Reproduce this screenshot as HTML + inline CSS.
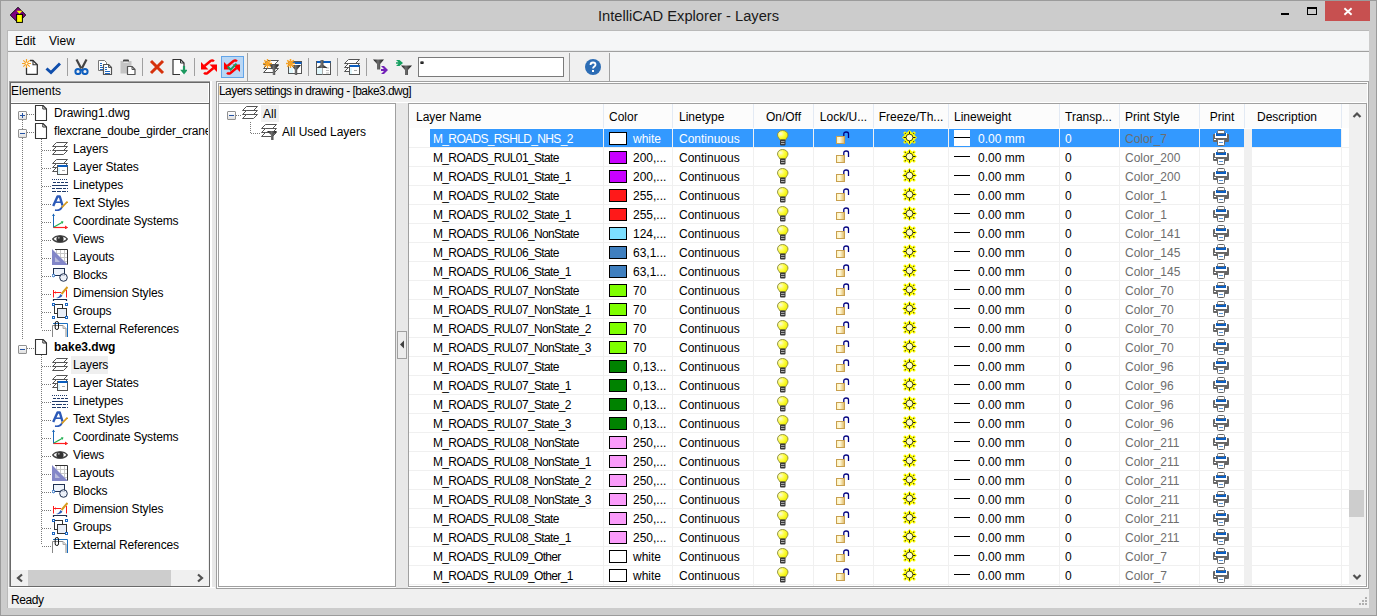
<!DOCTYPE html><html><head><meta charset="utf-8"><style>
html,body{margin:0;padding:0;}
body{width:1377px;height:616px;position:relative;overflow:hidden;background:#cccccc;font-family:"Liberation Sans", sans-serif;font-size:12px;color:#000;}
.t{position:absolute;white-space:nowrap;line-height:18px;}
.ic{position:absolute;overflow:visible;}
</style></head><body>
<svg width="0" height="0" style="position:absolute"><defs>
<linearGradient id="gfun" x1="0" y1="0" x2="1" y2="0"><stop offset="0" stop-color="#141414"/><stop offset=".45" stop-color="#6e6e6e"/><stop offset="1" stop-color="#141414"/></linearGradient>
<radialGradient id="gbulb" cx=".3" cy=".35" r=".7"><stop offset="0" stop-color="#f8f8e8"/><stop offset=".45" stop-color="#ffff50"/><stop offset="1" stop-color="#f0f000"/></radialGradient>
<linearGradient id="glock" x1="0" y1="0" x2="1" y2="0"><stop offset="0" stop-color="#fff0b0"/><stop offset=".4" stop-color="#fffbe0"/><stop offset="1" stop-color="#e0b860"/></linearGradient>
</defs>
<symbol id="appicon" viewBox="0 0 16 16"><path d="M8 0.3L15.8 8L8 15.7L0.2 8Z" fill="#800080" stroke="#000" stroke-width=".9"/><path d="M6.6 3.8H12.4L9.5 7Z" fill="#ffff00"/><rect x="6.6" y="7.4" width="5.8" height="8" fill="#ffff00" stroke="#000" stroke-width="1"/></symbol>
<symbol id="i_new" viewBox="0 0 16 16"><path d="M4.5 1.5H11L15.3 5.8V15.3H4.5Z" fill="#fff"/><path d="M8 1.5H11L15.3 5.8V15.3H4.5V8.5" fill="none" stroke="#333" stroke-width="1.3" stroke-linejoin="round"/><path d="M11 1.5V5.8H15.3" fill="none" stroke="#333" stroke-width="1.1"/><g stroke="#f7a325" stroke-width="1.2"><path d="M4.5 0v9M0 4.5h9M1.3 1.3l6.4 6.4M7.7 1.3l-6.4 6.4"/></g><circle cx="4.5" cy="4.5" r="1" fill="#fff"/></symbol>
<symbol id="i_check" viewBox="0 0 16 16"><path d="M1.5 9.5L6 13.5L15 4.5" fill="none" stroke="#0f4eac" stroke-width="3"/></symbol>
<symbol id="i_cut" viewBox="0 0 16 16"><path d="M2.5 0.5L7.2 9.5M12.5 0.5L7.8 9.5" stroke="#444" stroke-width="2.2"/><circle cx="4" cy="12.5" r="2.6" fill="none" stroke="#0f5fbf" stroke-width="2"/><circle cx="11" cy="12.5" r="2.6" fill="none" stroke="#0f5fbf" stroke-width="2"/><rect x="6" y="10" width="3" height="2" fill="#0f5fbf"/></symbol>
<symbol id="i_copy" viewBox="0 0 16 16"><path d="M1.5 1.5h6l2 2v8h-8z" fill="#fff" stroke="#777" stroke-width="1"/><g fill="#1a66c2"><rect x="3" y="4" width="2" height="1"/><rect x="3" y="6" width="2" height="1"/><rect x="3" y="8" width="3" height="1"/><rect x="3" y="10" width="3" height="1"/></g><path d="M6.5 5.5h5l3 3v7h-8z" fill="#fff" stroke="#555" stroke-width="1.2" stroke-linejoin="round"/><path d="M11.5 5.5v3h3" fill="none" stroke="#555" stroke-width="1"/><g fill="#1a66c2"><rect x="8" y="8" width="2" height="1"/><rect x="8" y="10" width="2" height="1"/><rect x="8" y="12" width="5" height="1"/><rect x="8" y="14" width="5" height="1"/></g></symbol>
<symbol id="i_paste" viewBox="0 0 16 16"><rect x="0.5" y="2" width="11" height="12.5" fill="#c4c4c4"/><rect x="3" y="0.5" width="6" height="2.5" rx="1" fill="#444"/><rect x="3.5" y="2.5" width="5" height="1" fill="#fff"/><path d="M7.5 7.5h4.5l3 3v5h-7.5z" fill="#fff" stroke="#555" stroke-width="1.2" stroke-linejoin="round"/><path d="M12 7.5v3h3" fill="none" stroke="#555" stroke-width="1"/></symbol>
<symbol id="i_del" viewBox="0 0 16 16"><path d="M2 2L14 14M14 2L2 14" stroke="#d6310b" stroke-width="3"/></symbol>
<symbol id="i_import" viewBox="0 0 16 16"><path d="M2 0.5h7.5l3.5 3.5v11.5h-11z" fill="#fff"/><path d="M9 15.5H2V0.5h7.5L13 4V8" fill="none" stroke="#333" stroke-width="1.2" stroke-linejoin="round"/><path d="M9.5 0.5V4H13" fill="none" stroke="#333" stroke-width="1"/><path d="M13 7V14" stroke="#1e9a60" stroke-width="2.2"/><path d="M9.2 10.8L13 15.5L16.8 10.8Z" fill="#1e9a60"/></symbol>
<symbol id="i_sync" viewBox="0 0 16 16"><path d="M0 3L0 10.5L7.5 10.5Z" fill="#ff0000"/><path d="M3.5 7L9.5 2C10.8 1 12 1.2 12.8 2.5" fill="none" stroke="#ff0000" stroke-width="2.4"/><path d="M16 13L16 5.5L8.5 5.5Z" fill="#ff0000"/><path d="M12.5 9L6.5 14C5.2 15 4 14.8 3.2 13.5" fill="none" stroke="#ff0000" stroke-width="2.4"/></symbol>
<symbol id="i_sync2" viewBox="0 0 16 16"><use href="#i_sync"/><path d="M3.6 7.5L6.6 10.6L12.5 4.6" fill="none" stroke="#16a060" stroke-width="2"/></symbol>
<symbol id="layers3" viewBox="0 0 16 16"><g fill="#fff" stroke="#555" stroke-width="1"><path d="M4.5 1.5h11l-4 4h-11z"/><path d="M4.5 5.5h11l-4 4h-11z"/><path d="M4.5 9.5h11l-4 4h-11z"/></g></symbol>
<symbol id="funnel" viewBox="0 0 16 16"><path d="M0 0H10L6.2 4.8V10H3.8V4.8Z" fill="url(#gfun)"/></symbol>
<symbol id="i_lf1" viewBox="0 0 16 16"><use href="#layers3"/><use href="#funnel" x="6" y="6"/><g stroke="#f7a325" stroke-width="1.4"><path d="M4.5 0v9M0 4.5h9M1.3 1.3l6.4 6.4M7.7 1.3l-6.4 6.4"/></g></symbol>
<symbol id="i_lf2" viewBox="0 0 16 16"><rect x="2.5" y="2.5" width="13" height="12" fill="#fff" stroke="#555"/><rect x="3" y="3" width="12.5" height="2" fill="#0b5ec0"/><rect x="3" y="9" width="4" height="5" fill="#dff6fb"/><use href="#funnel" x="5" y="6"/><g stroke="#f7a325" stroke-width="1.6"><path d="M4.5 0v9M0 4.5h9M1.3 1.3l6.4 6.4M7.7 1.3l-6.4 6.4"/></g></symbol>
<symbol id="i_lf3" viewBox="0 0 16 16"><rect x="1.5" y="2.5" width="14" height="13" fill="#fff" stroke="#555"/><rect x="2" y="2" width="13.5" height="2" fill="#0b5ec0"/><rect x="2" y="9" width="5" height="6" fill="#dff6fb"/><path d="M7.5 9v6.5" stroke="#aaa"/><g stroke="#bbb"><path d="M11 9h3M11 11.5h3M11 14h3"/></g><path d="M5.5 1h3v5l4 3h-11l4-3z" fill="url(#gfun)"/></symbol>
<symbol id="i_lf4" viewBox="0 0 16 16"><g fill="#fff" stroke="#555" stroke-width="1"><path d="M4.5 0.5h11l-4 4h-11z"/><path d="M4.5 4.5h11l-4 4h-11z"/><path d="M4.5 8.5h11l-4 4h-11z"/></g><rect x="5.5" y="6.5" width="10" height="9" fill="#fff" stroke="#555"/><rect x="6" y="6" width="9.5" height="2" fill="#0b5ec0"/><rect x="6" y="9" width="2" height="6" fill="#dff6fb"/><path d="M10 11.5h3" stroke="#aaa"/></symbol>
<symbol id="i_lf5" viewBox="0 0 16 16"><path d="M0 0.5H11L7.2 5V10.5H4V5Z" fill="url(#gfun)"/><path d="M8 7h3l4 4-4 4h-3l3-3h-3v-2h3z" fill="#7321b8"/></symbol>
<symbol id="i_lf6" viewBox="0 0 16 16"><path d="M5 6.5H16L12 11V16H9V11Z" fill="url(#gfun)"/><path d="M0 1h3.5l3.5 3-3.5 3H0l2.5-2.3H0V3.3h2.5z" fill="#16a060"/></symbol>
<symbol id="i_help" viewBox="0 0 16 16"><circle cx="8" cy="8" r="8" fill="#2d6db5"/><path d="M5.5 6C5.5 4.3 6.6 3.5 8 3.5S10.5 4.4 10.5 5.8C10.5 7.5 8 7.6 8 9.5" fill="none" stroke="#fff" stroke-width="1.8"/><rect x="7" y="11" width="2" height="2" fill="#fff"/></symbol>
<symbol id="page" viewBox="0 0 16 16"><path d="M2.5 0.5h7.5l3.5 3.5v11.5h-11z" fill="#fff" stroke="#333" stroke-width="1.1" stroke-linejoin="round"/><path d="M9.8 0.5v3.5h3.5" fill="none" stroke="#333" stroke-width="1"/></symbol>
<symbol id="t_layers" viewBox="0 0 16 16"><g fill="#fff" stroke="#555" stroke-width="1"><path d="M4.5 1.5h11l-4 4h-11z"/><path d="M4.5 5.5h11l-4 4h-11z"/><path d="M4.5 9.5h11l-4 4h-11z"/></g></symbol>
<symbol id="t_lstates" viewBox="0 0 16 16"><g fill="#fff" stroke="#555" stroke-width="1"><path d="M4.5 0.5h11l-4 4h-11z"/><path d="M4.5 4.5h11l-4 4h-11z"/><path d="M4.5 8.5h11l-4 4h-11z"/></g><rect x="5.5" y="6.5" width="10" height="9" fill="#fff" stroke="#555"/><rect x="6" y="6" width="9.5" height="2" fill="#0b5ec0"/><rect x="6" y="9" width="2" height="6" fill="#dff6fb"/><path d="M10 11.5h3" stroke="#aaa"/></symbol>
<symbol id="t_linetypes" viewBox="0 0 16 16"><g stroke="#1f3a6a" stroke-width="1"><path d="M0 2.5h16" stroke-dasharray="1 1"/><path d="M1 5.5h15" stroke-dasharray="3 1"/><path d="M0 8.5h16"/><path d="M0 11.5h16" stroke-dasharray="3 1 6 1"/><path d="M0 14.5h16" stroke-dasharray="4 1"/></g></symbol>
<symbol id="t_text" viewBox="0 0 16 16"><path d="M1.2 11 L5.5 1.5 H7.8 L10.5 10.5" fill="none" stroke="#2b59b8" stroke-width="2.4" stroke-linejoin="round"/><path d="M3.5 7.2H9.2" stroke="#2b59b8" stroke-width="1.6"/><path d="M3 15.2C6 15.8 9 14.5 10.8 11" fill="none" stroke="#2b59b8" stroke-width="1.8"/><path d="M9.8 12.5L15.5 6.5" stroke="#d79a1c" stroke-width="1.8"/></symbol>
<symbol id="t_coord" viewBox="0 0 16 16"><path d="M1.5 1v13.5h14" fill="none" stroke="#1a66b8" stroke-width="1"/><path d="M1.5 14.5h13.5" stroke="#ff2020" stroke-width="1.2"/><path d="M13 12.5l3 2-3 2z" fill="#ff2020"/><path d="M0 3l1.5-2.5L3 3z" fill="#1a66b8"/><path d="M2 14L10 9.5" stroke="#20b050" stroke-width="1.2"/><path d="M9 8l2.5 0.5-1 2.5z" fill="#20b050"/></symbol>
<symbol id="t_views" viewBox="0 0 16 16"><path d="M0.8 8C3.5 3.8 12.5 3.8 15.2 8C12.5 12.2 3.5 12.2 0.8 8Z" fill="#fff" stroke="#444" stroke-width="1.4"/><circle cx="8" cy="8" r="3.6" fill="#333"/><circle cx="6.8" cy="6.8" r="1" fill="#999"/></symbol>
<symbol id="t_layouts" viewBox="0 0 16 16"><path d="M0.5 0.5H15.5V15.5H0.5z" fill="#fff"/><g stroke="#c8c8c8"><path d="M4.5 0v16M8.5 0v16M12.5 0v16M0 4.5h16M0 8.5h16M0 12.5h16"/></g><path d="M0 0L16 16H0Z" fill="#8387c8"/><path d="M3 8L8 13H3Z" fill="#b9bcdc"/><path d="M3 0.5H15.5V15.5" fill="none" stroke="#333"/></symbol>
<symbol id="t_blocks" viewBox="0 0 16 16"><rect x="1.5" y="1.5" width="11" height="7" fill="#eef3fb" stroke="#1f3050"/><circle cx="11.5" cy="10.5" r="3.8" fill="#e8eef8" stroke="#1f3050" fill-opacity=".8"/><circle cx="1.5" cy="8.5" r="1.3" fill="#fff" stroke="#1a66c2"/></symbol>
<symbol id="t_dim" viewBox="0 0 16 16"><path d="M1.5 5V12.5M14.5 5V12.5M1.5 7.5H9" stroke="#ff1a1a" stroke-width="1"/><path d="M2 7.5L4 6.2V8.8Z" fill="#ff1a1a"/><path d="M15.5 2L9.5 9" stroke="#d79a1c" stroke-width="2"/><path d="M3.5 13C5.5 13 7.5 11.5 8.5 9L10.5 10.8C9 12.8 6.5 13.5 3.5 13Z" fill="#2b59b8"/><path d="M1.5 16V14.5H14.5V16" fill="none" stroke="#1f2f4f" stroke-width="1.2"/></symbol>
<symbol id="t_groups" viewBox="0 0 16 16"><rect x="2.5" y="1.5" width="8" height="9" fill="#fff" stroke="#333"/><rect x="5.5" y="5.5" width="9" height="9" fill="#e8eef8" stroke="#333"/><g fill="#fff" stroke="#1a66c2"><rect x="0.5" y="0.5" width="2" height="2"/><rect x="13.5" y="0.5" width="2" height="2"/><rect x="0.5" y="13.5" width="2" height="2"/><rect x="13.5" y="13.5" width="2" height="2"/></g></symbol>
<symbol id="t_xref" viewBox="0 0 16 16"><path d="M0.5 16V4.5H11L14 7.5V16" fill="#fff" stroke="#888" stroke-width="1"/><path d="M11 4.5V7.5H14" fill="#ddd" stroke="#aaa"/><path d="M1 2.5H15.5V16" fill="none" stroke="#1a6fc0" stroke-width="1"/><rect x="3.2" y="0.5" width="3.3" height="8" rx="1.6" fill="none" stroke="#111" stroke-width="1"/></symbol>
<symbol id="t_filter" viewBox="0 0 16 16"><g fill="#fff" stroke="#555" stroke-width="1"><path d="M4.5 0.5h11l-4 4h-11z"/><path d="M4.5 4.5h11l-4 4h-11z"/><path d="M4.5 8.5h11l-4 4h-11z"/></g><path d="M6 7H16L12.5 11V16.5H10V11Z" fill="url(#gfun)"/></symbol>
<symbol id="bulb" viewBox="0 0 12 16"><path d="M5.5 0.5C2.5 0.5 0.5 2.5 0.5 5C0.5 7.2 2.5 8.5 3 10H8.5C9 8.5 11 7.2 11 5C11 2.5 8.5 0.5 5.5 0.5Z" fill="url(#gbulb)" stroke="#8a8a40" stroke-width=".9"/><rect x="3" y="9.5" width="5.5" height="6" rx="1" fill="#3a3a3a"/><rect x="4" y="11" width="3.5" height="1" fill="#a0a0a0"/><rect x="4" y="13" width="3.5" height="1" fill="#b0b0b0"/></symbol>
<symbol id="lock" viewBox="0 0 14 14"><path d="M7.8 5V2.8Q7.8 1 10.1 1Q12.5 1 12.5 2.8V7" fill="none" stroke="#000080" stroke-width="1.3"/><rect x="0.5" y="5.5" width="8" height="7" fill="url(#glock)" stroke="#c8a050" stroke-width="1"/></symbol>
<symbol id="sun" viewBox="0 0 16 16"><path d="M7.5 0L15 7.5L7.5 15L0 7.5Z" fill="#ffff00"/><g fill="#ffff00"><circle cx="3" cy="3" r="1.6"/><circle cx="12" cy="3" r="1.6"/><circle cx="3" cy="12" r="1.6"/><circle cx="12" cy="12" r="1.6"/></g><circle cx="7.5" cy="7.5" r="3.4" fill="#ffffc8" stroke="#3a3a00" stroke-width=".9"/><g stroke="#222" stroke-width="1"><path d="M7.5 1.5v2.5M7.5 11V13.5M1.5 7.5h2.5M11 7.5H13.5"/></g><g fill="#222"><circle cx="3.3" cy="3.3" r=".6"/><circle cx="11.7" cy="3.3" r=".6"/><circle cx="3.3" cy="11.7" r=".6"/><circle cx="11.7" cy="11.7" r=".6"/></g></symbol>
<symbol id="printer" viewBox="0 0 16 16"><rect x="0" y="4" width="16" height="8" rx="1" fill="#666"/><rect x="2" y="3" width="12" height="5" fill="#fff"/><rect x="3" y="3" width="10" height="3" fill="#0b5ec0"/><rect x="4.5" y="0.5" width="7" height="3" rx="1" fill="#fff" stroke="#666"/><rect x="4.5" y="9.5" width="7" height="6" rx="1" fill="#fff" stroke="#666"/><path d="M6 12.5h4" stroke="#5a9ae0"/><rect x="1" y="9" width="2" height="1" fill="#fff"/></symbol>
</svg>
<div style="position:absolute;left:0px;top:0px;width:1377px;height:616px;box-sizing:border-box;border:1px solid #9b9b9b;"></div><svg class="ic" style="left:10px;top:7px" width="16" height="16" viewBox="0 0 16 16"><use href="#appicon"/></svg><div class="t" style="left:0px;top:6px;width:1377px;text-align:center;font-size:14.7px;line-height:20px;color:#1a1a1a;">IntelliCAD Explorer - Layers</div><div style="position:absolute;left:1281px;top:13px;width:8px;height:2px;background:#000;"></div><div style="position:absolute;left:1307px;top:7px;width:10px;height:8px;box-sizing:border-box;border:1px solid #000;border-top-width:2px;"></div><div style="position:absolute;left:1325px;top:1px;width:45px;height:20px;background:#c75050;"></div><svg class="ic" style="left:1344px;top:8px" width="8" height="7" viewBox="0 0 8 7"><path d="M0.4 0.3L7.6 6.7M7.6 0.3L0.4 6.7" stroke="#fff" stroke-width="1.9"/></svg><div style="position:absolute;left:7px;top:30px;width:1362px;height:578px;background:#f0f0f0;box-sizing:border-box;border-left:1px solid #b9b9b9;border-top:1px solid #b9b9b9;"></div><div style="position:absolute;left:8px;top:31px;width:1361px;height:19px;background:#f5f6f7;"></div><div style="position:absolute;left:8px;top:50px;width:1361px;height:1px;background:#e8e9ea;"></div><div style="position:absolute;left:8px;top:51px;width:1361px;height:1px;background:#a0a0a0;"></div><div class="t" style="left:15px;top:32px;">Edit</div><div class="t" style="left:49px;top:32px;">View</div><div style="position:absolute;left:8px;top:52px;width:1361px;height:29px;background:#f5f6f7;"></div><div style="position:absolute;left:8px;top:52px;width:602px;height:29px;background:#f0f0f0;"></div><div style="position:absolute;left:221px;top:56px;width:23px;height:22px;box-sizing:border-box;background:#b9d7f5;border:1px solid #62a4e8;"></div><svg class="ic" style="left:22px;top:59px" width="16" height="16" viewBox="0 0 16 16"><use href="#i_new"/></svg><svg class="ic" style="left:45px;top:59px" width="16" height="16" viewBox="0 0 16 16"><use href="#i_check"/></svg><div style="position:absolute;left:67px;top:58px;width:1px;height:18px;background:#a0a0a0;"></div><svg class="ic" style="left:74px;top:59px" width="16" height="16" viewBox="0 0 16 16"><use href="#i_cut"/></svg><svg class="ic" style="left:97px;top:59px" width="16" height="16" viewBox="0 0 16 16"><use href="#i_copy"/></svg><svg class="ic" style="left:120px;top:59px" width="16" height="16" viewBox="0 0 16 16"><use href="#i_paste"/></svg><div style="position:absolute;left:142px;top:58px;width:1px;height:18px;background:#a0a0a0;"></div><svg class="ic" style="left:149px;top:59px" width="16" height="16" viewBox="0 0 16 16"><use href="#i_del"/></svg><svg class="ic" style="left:171px;top:59px" width="16" height="16" viewBox="0 0 16 16"><use href="#i_import"/></svg><div style="position:absolute;left:194px;top:58px;width:1px;height:18px;background:#a0a0a0;"></div><svg class="ic" style="left:201px;top:59px" width="16" height="16" viewBox="0 0 16 16"><use href="#i_sync"/></svg><svg class="ic" style="left:224px;top:59px" width="16" height="16" viewBox="0 0 16 16"><use href="#i_sync2"/></svg><svg class="ic" style="left:263px;top:59px" width="16" height="16" viewBox="0 0 16 16"><use href="#i_lf1"/></svg><svg class="ic" style="left:286px;top:59px" width="16" height="16" viewBox="0 0 16 16"><use href="#i_lf2"/></svg><div style="position:absolute;left:308px;top:58px;width:1px;height:18px;background:#a0a0a0;"></div><svg class="ic" style="left:315px;top:59px" width="16" height="16" viewBox="0 0 16 16"><use href="#i_lf3"/></svg><div style="position:absolute;left:337px;top:58px;width:1px;height:18px;background:#a0a0a0;"></div><svg class="ic" style="left:344px;top:59px" width="16" height="16" viewBox="0 0 16 16"><use href="#i_lf4"/></svg><div style="position:absolute;left:366px;top:58px;width:1px;height:18px;background:#a0a0a0;"></div><svg class="ic" style="left:373px;top:59px" width="16" height="16" viewBox="0 0 16 16"><use href="#i_lf5"/></svg><svg class="ic" style="left:396px;top:59px" width="16" height="16" viewBox="0 0 16 16"><use href="#i_lf6"/></svg><svg class="ic" style="left:585px;top:59px" width="16" height="16" viewBox="0 0 16 16"><use href="#i_help"/></svg><div style="position:absolute;left:247px;top:53px;width:1px;height:28px;background:#a0a0a0;"></div><div style="position:absolute;left:569px;top:53px;width:1px;height:28px;background:#a0a0a0;"></div><div style="position:absolute;left:609px;top:53px;width:1px;height:28px;background:#a0a0a0;"></div><div style="position:absolute;left:418px;top:57px;width:146px;height:20px;box-sizing:border-box;background:#fff;border:1px solid #7a7a7a;"></div><svg class="ic" style="left:420px;top:61px" width="4" height="3" viewBox="0 0 4 3"><path d="M2 0V3M0 1.2H4M0.5 3L2 1.5L3.5 3" stroke="#202020" stroke-width="1"/></svg><div style="position:absolute;left:9px;top:81px;width:201px;height:506px;box-sizing:border-box;border-top:1px solid #a0a0a0;border-left:1px solid #a0a0a0;"></div><div style="position:absolute;left:10px;top:82px;width:200px;height:505px;box-sizing:border-box;border:1px solid #696969;"></div><div class="t" style="left:11px;top:82px;">Elements</div><div style="position:absolute;left:11px;top:102px;width:198px;height:1px;background:#fff;"></div><div style="position:absolute;left:11px;top:103px;width:198px;height:1px;background:#696969;"></div><div style="position:absolute;left:208px;top:83px;width:1px;height:19px;background:#fff;"></div><div style="position:absolute;left:11px;top:104px;width:197px;height:466px;background:#fff;"></div><div style="position:absolute;left:210px;top:81px;width:2px;height:507px;background:#fff;"></div><div style="position:absolute;left:212px;top:81px;width:4px;height:507px;background:#e8e8e8;"></div><div style="position:absolute;left:216px;top:81px;width:1153px;height:508px;box-sizing:border-box;border-top:1px solid #a0a0a0;border-left:1px solid #a0a0a0;border-right:1px solid #a0a0a0;border-bottom:1px solid #a0a0a0;"></div><div style="position:absolute;left:217px;top:82px;width:1151px;height:506px;box-sizing:border-box;border-top:1px solid #fff;border-left:1px solid #fff;border-right:1px solid #fff;border-bottom:1px solid #fff;"></div><div style="position:absolute;left:218px;top:83px;width:1149px;height:20px;box-sizing:border-box;border-top:1px solid #a0a0a0;border-left:1px solid #a0a0a0;"></div><div style="position:absolute;left:219px;top:102px;width:1147px;height:1px;background:#fff;"></div><div class="t" style="left:219px;top:82px;letter-spacing:-0.55px;">Layers settings in drawing - [bake3.dwg]</div><div style="position:absolute;left:396px;top:103px;width:12px;height:485px;background:#e8e8e8;"></div><div style="position:absolute;left:218px;top:103px;width:178px;height:484px;box-sizing:border-box;background:#fff;border:1px solid #a0a0a0;"></div><div style="position:absolute;left:397px;top:331px;width:10px;height:28px;box-sizing:border-box;background:#ececec;border:1px solid #a0a0a0;"></div><svg class="ic" style="left:399px;top:340px" width="6" height="9" viewBox="0 0 6 9"><path d="M5 0.5L1 4.5L5 8.5Z" fill="#404040"/></svg><div style="position:absolute;left:408px;top:103px;width:959px;height:484px;box-sizing:border-box;background:#fff;border:1px solid #a0a0a0;"></div><div style="position:absolute;left:11px;top:104px;width:197px;height:466px;overflow:hidden"><div style="position:absolute;left:11px;top:16px;width:1px;height:220px;background:repeating-linear-gradient(to bottom,#7a7a7a 0 1px,transparent 1px 2px);"></div><div style="position:absolute;left:16px;top:10px;width:8px;height:1px;background:repeating-linear-gradient(to right,#7a7a7a 0 1px,transparent 1px 2px);"></div><div style="position:absolute;left:16px;top:28px;width:8px;height:1px;background:repeating-linear-gradient(to right,#7a7a7a 0 1px,transparent 1px 2px);"></div><div style="position:absolute;left:16px;top:244px;width:8px;height:1px;background:repeating-linear-gradient(to right,#7a7a7a 0 1px,transparent 1px 2px);"></div><div style="position:absolute;left:7px;top:7px;width:9px;height:9px;box-sizing:border-box;border:1px solid #919191;background:linear-gradient(#fff,#e0e0e0);border-radius:1px"></div><div style="position:absolute;left:9px;top:11px;width:5px;height:1px;background:#2453a4;"></div><div style="position:absolute;left:11px;top:9px;width:1px;height:5px;background:#2453a4;"></div><div style="position:absolute;left:7px;top:25px;width:9px;height:9px;box-sizing:border-box;border:1px solid #919191;background:linear-gradient(#fff,#e0e0e0);border-radius:1px"></div><div style="position:absolute;left:9px;top:29px;width:5px;height:1px;background:#2453a4;"></div><div style="position:absolute;left:7px;top:241px;width:9px;height:9px;box-sizing:border-box;border:1px solid #919191;background:linear-gradient(#fff,#e0e0e0);border-radius:1px"></div><div style="position:absolute;left:9px;top:245px;width:5px;height:1px;background:#2453a4;"></div><svg class="ic" style="left:22px;top:1px" width="16" height="16" viewBox="0 0 16 16"><use href="#page"/></svg><div class="t" style="left:43px;top:0px;">Drawing1.dwg</div><svg class="ic" style="left:22px;top:19px" width="16" height="16" viewBox="0 0 16 16"><use href="#page"/></svg><div class="t" style="left:43px;top:18px;letter-spacing:-0.2px;">flexcrane_doube_girder_crane_4t</div><svg class="ic" style="left:22px;top:235px" width="16" height="16" viewBox="0 0 16 16"><use href="#page"/></svg><div class="t" style="left:43px;top:234px;font-weight:bold;">bake3.dwg</div><div style="position:absolute;left:30px;top:35px;width:1px;height:190px;background:repeating-linear-gradient(to bottom,#7a7a7a 0 1px,transparent 1px 2px);"></div><div style="position:absolute;left:31px;top:46px;width:9px;height:1px;background:repeating-linear-gradient(to right,#7a7a7a 0 1px,transparent 1px 2px);"></div><svg class="ic" style="left:41px;top:37px" width="16" height="16" viewBox="0 0 16 16"><use href="#t_layers"/></svg><div class="t" style="left:62px;top:36px;letter-spacing:-0.15px;">Layers</div><div style="position:absolute;left:31px;top:64px;width:9px;height:1px;background:repeating-linear-gradient(to right,#7a7a7a 0 1px,transparent 1px 2px);"></div><svg class="ic" style="left:41px;top:55px" width="16" height="16" viewBox="0 0 16 16"><use href="#t_lstates"/></svg><div class="t" style="left:62px;top:54px;letter-spacing:-0.15px;">Layer States</div><div style="position:absolute;left:31px;top:82px;width:9px;height:1px;background:repeating-linear-gradient(to right,#7a7a7a 0 1px,transparent 1px 2px);"></div><svg class="ic" style="left:41px;top:73px" width="16" height="16" viewBox="0 0 16 16"><use href="#t_linetypes"/></svg><div class="t" style="left:62px;top:72px;letter-spacing:-0.15px;">Linetypes</div><div style="position:absolute;left:31px;top:100px;width:9px;height:1px;background:repeating-linear-gradient(to right,#7a7a7a 0 1px,transparent 1px 2px);"></div><svg class="ic" style="left:41px;top:91px" width="16" height="16" viewBox="0 0 16 16"><use href="#t_text"/></svg><div class="t" style="left:62px;top:90px;letter-spacing:-0.15px;">Text Styles</div><div style="position:absolute;left:31px;top:118px;width:9px;height:1px;background:repeating-linear-gradient(to right,#7a7a7a 0 1px,transparent 1px 2px);"></div><svg class="ic" style="left:41px;top:109px" width="16" height="16" viewBox="0 0 16 16"><use href="#t_coord"/></svg><div class="t" style="left:62px;top:108px;letter-spacing:-0.15px;">Coordinate Systems</div><div style="position:absolute;left:31px;top:136px;width:9px;height:1px;background:repeating-linear-gradient(to right,#7a7a7a 0 1px,transparent 1px 2px);"></div><svg class="ic" style="left:41px;top:127px" width="16" height="16" viewBox="0 0 16 16"><use href="#t_views"/></svg><div class="t" style="left:62px;top:126px;letter-spacing:-0.15px;">Views</div><div style="position:absolute;left:31px;top:154px;width:9px;height:1px;background:repeating-linear-gradient(to right,#7a7a7a 0 1px,transparent 1px 2px);"></div><svg class="ic" style="left:41px;top:145px" width="16" height="16" viewBox="0 0 16 16"><use href="#t_layouts"/></svg><div class="t" style="left:62px;top:144px;letter-spacing:-0.15px;">Layouts</div><div style="position:absolute;left:31px;top:172px;width:9px;height:1px;background:repeating-linear-gradient(to right,#7a7a7a 0 1px,transparent 1px 2px);"></div><svg class="ic" style="left:41px;top:163px" width="16" height="16" viewBox="0 0 16 16"><use href="#t_blocks"/></svg><div class="t" style="left:62px;top:162px;letter-spacing:-0.15px;">Blocks</div><div style="position:absolute;left:31px;top:190px;width:9px;height:1px;background:repeating-linear-gradient(to right,#7a7a7a 0 1px,transparent 1px 2px);"></div><svg class="ic" style="left:41px;top:181px" width="16" height="16" viewBox="0 0 16 16"><use href="#t_dim"/></svg><div class="t" style="left:62px;top:180px;letter-spacing:-0.15px;">Dimension Styles</div><div style="position:absolute;left:31px;top:208px;width:9px;height:1px;background:repeating-linear-gradient(to right,#7a7a7a 0 1px,transparent 1px 2px);"></div><svg class="ic" style="left:41px;top:199px" width="16" height="16" viewBox="0 0 16 16"><use href="#t_groups"/></svg><div class="t" style="left:62px;top:198px;letter-spacing:-0.15px;">Groups</div><div style="position:absolute;left:31px;top:226px;width:9px;height:1px;background:repeating-linear-gradient(to right,#7a7a7a 0 1px,transparent 1px 2px);"></div><svg class="ic" style="left:41px;top:217px" width="16" height="16" viewBox="0 0 16 16"><use href="#t_xref"/></svg><div class="t" style="left:62px;top:216px;letter-spacing:-0.15px;">External References</div><div style="position:absolute;left:30px;top:251px;width:1px;height:190px;background:repeating-linear-gradient(to bottom,#7a7a7a 0 1px,transparent 1px 2px);"></div><div style="position:absolute;left:31px;top:262px;width:9px;height:1px;background:repeating-linear-gradient(to right,#7a7a7a 0 1px,transparent 1px 2px);"></div><div style="position:absolute;left:60px;top:252px;width:37px;height:18px;background:#efefef;"></div><svg class="ic" style="left:41px;top:253px" width="16" height="16" viewBox="0 0 16 16"><use href="#t_layers"/></svg><div class="t" style="left:62px;top:252px;letter-spacing:-0.15px;">Layers</div><div style="position:absolute;left:31px;top:280px;width:9px;height:1px;background:repeating-linear-gradient(to right,#7a7a7a 0 1px,transparent 1px 2px);"></div><svg class="ic" style="left:41px;top:271px" width="16" height="16" viewBox="0 0 16 16"><use href="#t_lstates"/></svg><div class="t" style="left:62px;top:270px;letter-spacing:-0.15px;">Layer States</div><div style="position:absolute;left:31px;top:298px;width:9px;height:1px;background:repeating-linear-gradient(to right,#7a7a7a 0 1px,transparent 1px 2px);"></div><svg class="ic" style="left:41px;top:289px" width="16" height="16" viewBox="0 0 16 16"><use href="#t_linetypes"/></svg><div class="t" style="left:62px;top:288px;letter-spacing:-0.15px;">Linetypes</div><div style="position:absolute;left:31px;top:316px;width:9px;height:1px;background:repeating-linear-gradient(to right,#7a7a7a 0 1px,transparent 1px 2px);"></div><svg class="ic" style="left:41px;top:307px" width="16" height="16" viewBox="0 0 16 16"><use href="#t_text"/></svg><div class="t" style="left:62px;top:306px;letter-spacing:-0.15px;">Text Styles</div><div style="position:absolute;left:31px;top:334px;width:9px;height:1px;background:repeating-linear-gradient(to right,#7a7a7a 0 1px,transparent 1px 2px);"></div><svg class="ic" style="left:41px;top:325px" width="16" height="16" viewBox="0 0 16 16"><use href="#t_coord"/></svg><div class="t" style="left:62px;top:324px;letter-spacing:-0.15px;">Coordinate Systems</div><div style="position:absolute;left:31px;top:352px;width:9px;height:1px;background:repeating-linear-gradient(to right,#7a7a7a 0 1px,transparent 1px 2px);"></div><svg class="ic" style="left:41px;top:343px" width="16" height="16" viewBox="0 0 16 16"><use href="#t_views"/></svg><div class="t" style="left:62px;top:342px;letter-spacing:-0.15px;">Views</div><div style="position:absolute;left:31px;top:370px;width:9px;height:1px;background:repeating-linear-gradient(to right,#7a7a7a 0 1px,transparent 1px 2px);"></div><svg class="ic" style="left:41px;top:361px" width="16" height="16" viewBox="0 0 16 16"><use href="#t_layouts"/></svg><div class="t" style="left:62px;top:360px;letter-spacing:-0.15px;">Layouts</div><div style="position:absolute;left:31px;top:388px;width:9px;height:1px;background:repeating-linear-gradient(to right,#7a7a7a 0 1px,transparent 1px 2px);"></div><svg class="ic" style="left:41px;top:379px" width="16" height="16" viewBox="0 0 16 16"><use href="#t_blocks"/></svg><div class="t" style="left:62px;top:378px;letter-spacing:-0.15px;">Blocks</div><div style="position:absolute;left:31px;top:406px;width:9px;height:1px;background:repeating-linear-gradient(to right,#7a7a7a 0 1px,transparent 1px 2px);"></div><svg class="ic" style="left:41px;top:397px" width="16" height="16" viewBox="0 0 16 16"><use href="#t_dim"/></svg><div class="t" style="left:62px;top:396px;letter-spacing:-0.15px;">Dimension Styles</div><div style="position:absolute;left:31px;top:424px;width:9px;height:1px;background:repeating-linear-gradient(to right,#7a7a7a 0 1px,transparent 1px 2px);"></div><svg class="ic" style="left:41px;top:415px" width="16" height="16" viewBox="0 0 16 16"><use href="#t_groups"/></svg><div class="t" style="left:62px;top:414px;letter-spacing:-0.15px;">Groups</div><div style="position:absolute;left:31px;top:442px;width:9px;height:1px;background:repeating-linear-gradient(to right,#7a7a7a 0 1px,transparent 1px 2px);"></div><svg class="ic" style="left:41px;top:433px" width="16" height="16" viewBox="0 0 16 16"><use href="#t_xref"/></svg><div class="t" style="left:62px;top:432px;letter-spacing:-0.15px;">External References</div></div><div style="position:absolute;left:11px;top:570px;width:198px;height:16px;background:#f0f0f0;"></div><div style="position:absolute;left:28px;top:570px;width:143px;height:16px;background:#cdcdcd;"></div><svg class="ic" style="left:16px;top:574px" width="7" height="8" viewBox="0 0 7 8"><path d="M6 0.5L2 4L6 7.5" fill="none" stroke="#505050" stroke-width="2.2"/></svg><svg class="ic" style="left:197px;top:574px" width="7" height="8" viewBox="0 0 7 8"><path d="M1 0.5L5 4L1 7.5" fill="none" stroke="#505050" stroke-width="2.2"/></svg><div style="position:absolute;left:227px;top:111px;width:9px;height:9px;box-sizing:border-box;border:1px solid #919191;background:linear-gradient(#fff,#e0e0e0);border-radius:1px"></div><div style="position:absolute;left:229px;top:115px;width:5px;height:1px;background:#2453a4;"></div><svg class="ic" style="left:242px;top:105px" width="16" height="16" viewBox="0 0 16 16"><use href="#t_layers"/></svg><div style="position:absolute;left:261px;top:105px;width:18px;height:17px;background:#f0f0f0;"></div><div class="t" style="left:263px;top:105px;">All</div><div style="position:absolute;left:250px;top:122px;width:1px;height:12px;background:repeating-linear-gradient(to bottom,#7a7a7a 0 1px,transparent 1px 2px);"></div><div style="position:absolute;left:236px;top:115px;width:6px;height:1px;background:repeating-linear-gradient(to right,#7a7a7a 0 1px,transparent 1px 2px);"></div><div style="position:absolute;left:251px;top:133px;width:10px;height:1px;background:repeating-linear-gradient(to right,#7a7a7a 0 1px,transparent 1px 2px);"></div><svg class="ic" style="left:261px;top:124px" width="16" height="16" viewBox="0 0 16 16"><use href="#t_filter"/></svg><div class="t" style="left:282px;top:123px;">All Used Layers</div><div style="position:absolute;left:409px;top:104px;width:940px;height:482px;overflow:hidden"><div style="position:absolute;left:0px;top:0px;width:940px;height:24px;background:#fcfcfc;"></div><div style="position:absolute;left:194px;top:0px;width:1px;height:24px;background:#e3eaf4;"></div><div style="position:absolute;left:263px;top:0px;width:1px;height:24px;background:#e3eaf4;"></div><div style="position:absolute;left:344px;top:0px;width:1px;height:24px;background:#e3eaf4;"></div><div style="position:absolute;left:404px;top:0px;width:1px;height:24px;background:#e3eaf4;"></div><div style="position:absolute;left:464px;top:0px;width:1px;height:24px;background:#e3eaf4;"></div><div style="position:absolute;left:539px;top:0px;width:1px;height:24px;background:#e3eaf4;"></div><div style="position:absolute;left:650px;top:0px;width:1px;height:24px;background:#e3eaf4;"></div><div style="position:absolute;left:710px;top:0px;width:1px;height:24px;background:#e3eaf4;"></div><div style="position:absolute;left:790px;top:0px;width:1px;height:24px;background:#e3eaf4;"></div><div style="position:absolute;left:835px;top:0px;width:1px;height:24px;background:#e3eaf4;"></div><div style="position:absolute;left:932px;top:0px;width:1px;height:24px;background:#e3eaf4;"></div><div style="position:absolute;left:0px;top:24px;width:940px;height:1px;background:#fff;"></div><div class="t" style="left:7px;top:4px;">Layer Name</div><div class="t" style="left:200px;top:4px;">Color</div><div class="t" style="left:270px;top:4px;">Linetype</div><div class="t" style="left:345px;top:4px;width:59px;text-align:center;">On/Off</div><div class="t" style="left:405px;top:4px;width:59px;text-align:center;">Lock/U...</div><div class="t" style="left:465px;top:4px;width:74px;text-align:center;">Freeze/Th...</div><div class="t" style="left:545px;top:4px;">Lineweight</div><div class="t" style="left:656px;top:4px;">Transp...</div><div class="t" style="left:716px;top:4px;">Print Style</div><div class="t" style="left:791px;top:4px;width:44px;text-align:center;">Print</div><div class="t" style="left:848px;top:4px;">Description</div><div style="position:absolute;left:194px;top:25px;width:1px;height:457px;background:#f0f0f0;"></div><div style="position:absolute;left:263px;top:25px;width:1px;height:457px;background:#f0f0f0;"></div><div style="position:absolute;left:344px;top:25px;width:1px;height:457px;background:#f0f0f0;"></div><div style="position:absolute;left:404px;top:25px;width:1px;height:457px;background:#f0f0f0;"></div><div style="position:absolute;left:464px;top:25px;width:1px;height:457px;background:#f0f0f0;"></div><div style="position:absolute;left:539px;top:25px;width:1px;height:457px;background:#f0f0f0;"></div><div style="position:absolute;left:650px;top:25px;width:1px;height:457px;background:#f0f0f0;"></div><div style="position:absolute;left:710px;top:25px;width:1px;height:457px;background:#f0f0f0;"></div><div style="position:absolute;left:790px;top:25px;width:1px;height:457px;background:#f0f0f0;"></div><div style="position:absolute;left:835px;top:25px;width:8px;height:457px;background:#f0f0f0;"></div><div style="position:absolute;left:932px;top:25px;width:1px;height:457px;background:#f0f0f0;"></div><div style="position:absolute;left:0px;top:43px;width:940px;height:1px;background:#f0f0f0;"></div><div style="position:absolute;left:21px;top:25px;width:173px;height:18px;background:#3399ff;"></div><div style="position:absolute;left:195px;top:25px;width:68px;height:18px;background:#3399ff;"></div><div style="position:absolute;left:264px;top:25px;width:80px;height:18px;background:#3399ff;"></div><div style="position:absolute;left:345px;top:25px;width:59px;height:18px;background:#3399ff;"></div><div style="position:absolute;left:405px;top:25px;width:59px;height:18px;background:#3399ff;"></div><div style="position:absolute;left:465px;top:25px;width:74px;height:18px;background:#3399ff;"></div><div style="position:absolute;left:540px;top:25px;width:110px;height:18px;background:#3399ff;"></div><div style="position:absolute;left:651px;top:25px;width:59px;height:18px;background:#3399ff;"></div><div style="position:absolute;left:711px;top:25px;width:79px;height:18px;background:#3399ff;"></div><div style="position:absolute;left:791px;top:25px;width:44px;height:18px;background:#3399ff;"></div><div style="position:absolute;left:843px;top:25px;width:89px;height:18px;background:#3399ff;"></div><div class="t" style="left:24px;top:26px;color:#fff;letter-spacing:-0.65px;">M_ROADS_RSHLD_NHS_2</div><div style="position:absolute;left:200px;top:28px;width:18px;height:13px;box-sizing:border-box;background:#ffffff;border:1px solid #000;"></div><div class="t" style="left:224px;top:26px;color:#fff;">white</div><div class="t" style="left:270px;top:26px;color:#fff;">Continuous</div><svg class="ic" style="left:368px;top:26px" width="12" height="16" viewBox="0 0 12 16"><use href="#bulb"/></svg><svg class="ic" style="left:427px;top:27px" width="14" height="14" viewBox="0 0 14 14"><use href="#lock"/></svg><svg class="ic" style="left:493px;top:26px" width="16" height="16" viewBox="0 0 16 16"><use href="#sun"/></svg><div style="position:absolute;left:545px;top:26px;width:16px;height:16px;background:#fff;"></div><div style="position:absolute;left:545px;top:33px;width:16px;height:1px;background:#000;"></div><div class="t" style="left:569px;top:26px;color:#fff;">0.00 mm</div><div class="t" style="left:656px;top:26px;color:#fff;">0</div><div class="t" style="left:716px;top:26px;color:#6d6d6d;">Color_7</div><svg class="ic" style="left:804px;top:26px" width="16" height="16" viewBox="0 0 16 16"><use href="#printer"/></svg><div style="position:absolute;left:0px;top:62px;width:940px;height:1px;background:#f0f0f0;"></div><div class="t" style="left:24px;top:45px;color:#000;letter-spacing:-0.65px;">M_ROADS_RUL01_State</div><div style="position:absolute;left:200px;top:47px;width:18px;height:13px;box-sizing:border-box;background:#c800ff;border:1px solid #000;"></div><div class="t" style="left:224px;top:45px;color:#000;">200,...</div><div class="t" style="left:270px;top:45px;color:#000;">Continuous</div><svg class="ic" style="left:368px;top:45px" width="12" height="16" viewBox="0 0 12 16"><use href="#bulb"/></svg><svg class="ic" style="left:427px;top:46px" width="14" height="14" viewBox="0 0 14 14"><use href="#lock"/></svg><svg class="ic" style="left:493px;top:45px" width="16" height="16" viewBox="0 0 16 16"><use href="#sun"/></svg><div style="position:absolute;left:545px;top:52px;width:16px;height:1px;background:#000;"></div><div class="t" style="left:569px;top:45px;color:#000;">0.00 mm</div><div class="t" style="left:656px;top:45px;color:#000;">0</div><div class="t" style="left:716px;top:45px;color:#6d6d6d;">Color_200</div><svg class="ic" style="left:804px;top:45px" width="16" height="16" viewBox="0 0 16 16"><use href="#printer"/></svg><div style="position:absolute;left:0px;top:81px;width:940px;height:1px;background:#f0f0f0;"></div><div class="t" style="left:24px;top:64px;color:#000;letter-spacing:-0.65px;">M_ROADS_RUL01_State_1</div><div style="position:absolute;left:200px;top:66px;width:18px;height:13px;box-sizing:border-box;background:#c800ff;border:1px solid #000;"></div><div class="t" style="left:224px;top:64px;color:#000;">200,...</div><div class="t" style="left:270px;top:64px;color:#000;">Continuous</div><svg class="ic" style="left:368px;top:64px" width="12" height="16" viewBox="0 0 12 16"><use href="#bulb"/></svg><svg class="ic" style="left:427px;top:65px" width="14" height="14" viewBox="0 0 14 14"><use href="#lock"/></svg><svg class="ic" style="left:493px;top:64px" width="16" height="16" viewBox="0 0 16 16"><use href="#sun"/></svg><div style="position:absolute;left:545px;top:71px;width:16px;height:1px;background:#000;"></div><div class="t" style="left:569px;top:64px;color:#000;">0.00 mm</div><div class="t" style="left:656px;top:64px;color:#000;">0</div><div class="t" style="left:716px;top:64px;color:#6d6d6d;">Color_200</div><svg class="ic" style="left:804px;top:64px" width="16" height="16" viewBox="0 0 16 16"><use href="#printer"/></svg><div style="position:absolute;left:0px;top:100px;width:940px;height:1px;background:#f0f0f0;"></div><div class="t" style="left:24px;top:83px;color:#000;letter-spacing:-0.65px;">M_ROADS_RUL02_State</div><div style="position:absolute;left:200px;top:85px;width:18px;height:13px;box-sizing:border-box;background:#ff1919;border:1px solid #000;"></div><div class="t" style="left:224px;top:83px;color:#000;">255,...</div><div class="t" style="left:270px;top:83px;color:#000;">Continuous</div><svg class="ic" style="left:368px;top:83px" width="12" height="16" viewBox="0 0 12 16"><use href="#bulb"/></svg><svg class="ic" style="left:427px;top:84px" width="14" height="14" viewBox="0 0 14 14"><use href="#lock"/></svg><svg class="ic" style="left:493px;top:83px" width="16" height="16" viewBox="0 0 16 16"><use href="#sun"/></svg><div style="position:absolute;left:545px;top:90px;width:16px;height:1px;background:#000;"></div><div class="t" style="left:569px;top:83px;color:#000;">0.00 mm</div><div class="t" style="left:656px;top:83px;color:#000;">0</div><div class="t" style="left:716px;top:83px;color:#6d6d6d;">Color_1</div><svg class="ic" style="left:804px;top:83px" width="16" height="16" viewBox="0 0 16 16"><use href="#printer"/></svg><div style="position:absolute;left:0px;top:119px;width:940px;height:1px;background:#f0f0f0;"></div><div class="t" style="left:24px;top:102px;color:#000;letter-spacing:-0.65px;">M_ROADS_RUL02_State_1</div><div style="position:absolute;left:200px;top:104px;width:18px;height:13px;box-sizing:border-box;background:#ff1919;border:1px solid #000;"></div><div class="t" style="left:224px;top:102px;color:#000;">255,...</div><div class="t" style="left:270px;top:102px;color:#000;">Continuous</div><svg class="ic" style="left:368px;top:102px" width="12" height="16" viewBox="0 0 12 16"><use href="#bulb"/></svg><svg class="ic" style="left:427px;top:103px" width="14" height="14" viewBox="0 0 14 14"><use href="#lock"/></svg><svg class="ic" style="left:493px;top:102px" width="16" height="16" viewBox="0 0 16 16"><use href="#sun"/></svg><div style="position:absolute;left:545px;top:109px;width:16px;height:1px;background:#000;"></div><div class="t" style="left:569px;top:102px;color:#000;">0.00 mm</div><div class="t" style="left:656px;top:102px;color:#000;">0</div><div class="t" style="left:716px;top:102px;color:#6d6d6d;">Color_1</div><svg class="ic" style="left:804px;top:102px" width="16" height="16" viewBox="0 0 16 16"><use href="#printer"/></svg><div style="position:absolute;left:0px;top:138px;width:940px;height:1px;background:#f0f0f0;"></div><div class="t" style="left:24px;top:121px;color:#000;letter-spacing:-0.65px;">M_ROADS_RUL06_NonState</div><div style="position:absolute;left:200px;top:123px;width:18px;height:13px;box-sizing:border-box;background:#7cdfff;border:1px solid #000;"></div><div class="t" style="left:224px;top:121px;color:#000;">124,...</div><div class="t" style="left:270px;top:121px;color:#000;">Continuous</div><svg class="ic" style="left:368px;top:121px" width="12" height="16" viewBox="0 0 12 16"><use href="#bulb"/></svg><svg class="ic" style="left:427px;top:122px" width="14" height="14" viewBox="0 0 14 14"><use href="#lock"/></svg><svg class="ic" style="left:493px;top:121px" width="16" height="16" viewBox="0 0 16 16"><use href="#sun"/></svg><div style="position:absolute;left:545px;top:128px;width:16px;height:1px;background:#000;"></div><div class="t" style="left:569px;top:121px;color:#000;">0.00 mm</div><div class="t" style="left:656px;top:121px;color:#000;">0</div><div class="t" style="left:716px;top:121px;color:#6d6d6d;">Color_141</div><svg class="ic" style="left:804px;top:121px" width="16" height="16" viewBox="0 0 16 16"><use href="#printer"/></svg><div style="position:absolute;left:0px;top:157px;width:940px;height:1px;background:#f0f0f0;"></div><div class="t" style="left:24px;top:140px;color:#000;letter-spacing:-0.65px;">M_ROADS_RUL06_State</div><div style="position:absolute;left:200px;top:142px;width:18px;height:13px;box-sizing:border-box;background:#3f7fbf;border:1px solid #000;"></div><div class="t" style="left:224px;top:140px;color:#000;">63,1...</div><div class="t" style="left:270px;top:140px;color:#000;">Continuous</div><svg class="ic" style="left:368px;top:140px" width="12" height="16" viewBox="0 0 12 16"><use href="#bulb"/></svg><svg class="ic" style="left:427px;top:141px" width="14" height="14" viewBox="0 0 14 14"><use href="#lock"/></svg><svg class="ic" style="left:493px;top:140px" width="16" height="16" viewBox="0 0 16 16"><use href="#sun"/></svg><div style="position:absolute;left:545px;top:147px;width:16px;height:1px;background:#000;"></div><div class="t" style="left:569px;top:140px;color:#000;">0.00 mm</div><div class="t" style="left:656px;top:140px;color:#000;">0</div><div class="t" style="left:716px;top:140px;color:#6d6d6d;">Color_145</div><svg class="ic" style="left:804px;top:140px" width="16" height="16" viewBox="0 0 16 16"><use href="#printer"/></svg><div style="position:absolute;left:0px;top:176px;width:940px;height:1px;background:#f0f0f0;"></div><div class="t" style="left:24px;top:159px;color:#000;letter-spacing:-0.65px;">M_ROADS_RUL06_State_1</div><div style="position:absolute;left:200px;top:161px;width:18px;height:13px;box-sizing:border-box;background:#3f7fbf;border:1px solid #000;"></div><div class="t" style="left:224px;top:159px;color:#000;">63,1...</div><div class="t" style="left:270px;top:159px;color:#000;">Continuous</div><svg class="ic" style="left:368px;top:159px" width="12" height="16" viewBox="0 0 12 16"><use href="#bulb"/></svg><svg class="ic" style="left:427px;top:160px" width="14" height="14" viewBox="0 0 14 14"><use href="#lock"/></svg><svg class="ic" style="left:493px;top:159px" width="16" height="16" viewBox="0 0 16 16"><use href="#sun"/></svg><div style="position:absolute;left:545px;top:166px;width:16px;height:1px;background:#000;"></div><div class="t" style="left:569px;top:159px;color:#000;">0.00 mm</div><div class="t" style="left:656px;top:159px;color:#000;">0</div><div class="t" style="left:716px;top:159px;color:#6d6d6d;">Color_145</div><svg class="ic" style="left:804px;top:159px" width="16" height="16" viewBox="0 0 16 16"><use href="#printer"/></svg><div style="position:absolute;left:0px;top:195px;width:940px;height:1px;background:#f0f0f0;"></div><div class="t" style="left:24px;top:178px;color:#000;letter-spacing:-0.65px;">M_ROADS_RUL07_NonState</div><div style="position:absolute;left:200px;top:180px;width:18px;height:13px;box-sizing:border-box;background:#7fff00;border:1px solid #000;"></div><div class="t" style="left:224px;top:178px;color:#000;">70</div><div class="t" style="left:270px;top:178px;color:#000;">Continuous</div><svg class="ic" style="left:368px;top:178px" width="12" height="16" viewBox="0 0 12 16"><use href="#bulb"/></svg><svg class="ic" style="left:427px;top:179px" width="14" height="14" viewBox="0 0 14 14"><use href="#lock"/></svg><svg class="ic" style="left:493px;top:178px" width="16" height="16" viewBox="0 0 16 16"><use href="#sun"/></svg><div style="position:absolute;left:545px;top:185px;width:16px;height:1px;background:#000;"></div><div class="t" style="left:569px;top:178px;color:#000;">0.00 mm</div><div class="t" style="left:656px;top:178px;color:#000;">0</div><div class="t" style="left:716px;top:178px;color:#6d6d6d;">Color_70</div><svg class="ic" style="left:804px;top:178px" width="16" height="16" viewBox="0 0 16 16"><use href="#printer"/></svg><div style="position:absolute;left:0px;top:214px;width:940px;height:1px;background:#f0f0f0;"></div><div class="t" style="left:24px;top:197px;color:#000;letter-spacing:-0.65px;">M_ROADS_RUL07_NonState_1</div><div style="position:absolute;left:200px;top:199px;width:18px;height:13px;box-sizing:border-box;background:#7fff00;border:1px solid #000;"></div><div class="t" style="left:224px;top:197px;color:#000;">70</div><div class="t" style="left:270px;top:197px;color:#000;">Continuous</div><svg class="ic" style="left:368px;top:197px" width="12" height="16" viewBox="0 0 12 16"><use href="#bulb"/></svg><svg class="ic" style="left:427px;top:198px" width="14" height="14" viewBox="0 0 14 14"><use href="#lock"/></svg><svg class="ic" style="left:493px;top:197px" width="16" height="16" viewBox="0 0 16 16"><use href="#sun"/></svg><div style="position:absolute;left:545px;top:204px;width:16px;height:1px;background:#000;"></div><div class="t" style="left:569px;top:197px;color:#000;">0.00 mm</div><div class="t" style="left:656px;top:197px;color:#000;">0</div><div class="t" style="left:716px;top:197px;color:#6d6d6d;">Color_70</div><svg class="ic" style="left:804px;top:197px" width="16" height="16" viewBox="0 0 16 16"><use href="#printer"/></svg><div style="position:absolute;left:0px;top:233px;width:940px;height:1px;background:#f0f0f0;"></div><div class="t" style="left:24px;top:216px;color:#000;letter-spacing:-0.65px;">M_ROADS_RUL07_NonState_2</div><div style="position:absolute;left:200px;top:218px;width:18px;height:13px;box-sizing:border-box;background:#7fff00;border:1px solid #000;"></div><div class="t" style="left:224px;top:216px;color:#000;">70</div><div class="t" style="left:270px;top:216px;color:#000;">Continuous</div><svg class="ic" style="left:368px;top:216px" width="12" height="16" viewBox="0 0 12 16"><use href="#bulb"/></svg><svg class="ic" style="left:427px;top:217px" width="14" height="14" viewBox="0 0 14 14"><use href="#lock"/></svg><svg class="ic" style="left:493px;top:216px" width="16" height="16" viewBox="0 0 16 16"><use href="#sun"/></svg><div style="position:absolute;left:545px;top:223px;width:16px;height:1px;background:#000;"></div><div class="t" style="left:569px;top:216px;color:#000;">0.00 mm</div><div class="t" style="left:656px;top:216px;color:#000;">0</div><div class="t" style="left:716px;top:216px;color:#6d6d6d;">Color_70</div><svg class="ic" style="left:804px;top:216px" width="16" height="16" viewBox="0 0 16 16"><use href="#printer"/></svg><div style="position:absolute;left:0px;top:252px;width:940px;height:1px;background:#f0f0f0;"></div><div class="t" style="left:24px;top:235px;color:#000;letter-spacing:-0.65px;">M_ROADS_RUL07_NonState_3</div><div style="position:absolute;left:200px;top:237px;width:18px;height:13px;box-sizing:border-box;background:#7fff00;border:1px solid #000;"></div><div class="t" style="left:224px;top:235px;color:#000;">70</div><div class="t" style="left:270px;top:235px;color:#000;">Continuous</div><svg class="ic" style="left:368px;top:235px" width="12" height="16" viewBox="0 0 12 16"><use href="#bulb"/></svg><svg class="ic" style="left:427px;top:236px" width="14" height="14" viewBox="0 0 14 14"><use href="#lock"/></svg><svg class="ic" style="left:493px;top:235px" width="16" height="16" viewBox="0 0 16 16"><use href="#sun"/></svg><div style="position:absolute;left:545px;top:242px;width:16px;height:1px;background:#000;"></div><div class="t" style="left:569px;top:235px;color:#000;">0.00 mm</div><div class="t" style="left:656px;top:235px;color:#000;">0</div><div class="t" style="left:716px;top:235px;color:#6d6d6d;">Color_70</div><svg class="ic" style="left:804px;top:235px" width="16" height="16" viewBox="0 0 16 16"><use href="#printer"/></svg><div style="position:absolute;left:0px;top:271px;width:940px;height:1px;background:#f0f0f0;"></div><div class="t" style="left:24px;top:254px;color:#000;letter-spacing:-0.65px;">M_ROADS_RUL07_State</div><div style="position:absolute;left:200px;top:256px;width:18px;height:13px;box-sizing:border-box;background:#008200;border:1px solid #000;"></div><div class="t" style="left:224px;top:254px;color:#000;">0,13...</div><div class="t" style="left:270px;top:254px;color:#000;">Continuous</div><svg class="ic" style="left:368px;top:254px" width="12" height="16" viewBox="0 0 12 16"><use href="#bulb"/></svg><svg class="ic" style="left:427px;top:255px" width="14" height="14" viewBox="0 0 14 14"><use href="#lock"/></svg><svg class="ic" style="left:493px;top:254px" width="16" height="16" viewBox="0 0 16 16"><use href="#sun"/></svg><div style="position:absolute;left:545px;top:261px;width:16px;height:1px;background:#000;"></div><div class="t" style="left:569px;top:254px;color:#000;">0.00 mm</div><div class="t" style="left:656px;top:254px;color:#000;">0</div><div class="t" style="left:716px;top:254px;color:#6d6d6d;">Color_96</div><svg class="ic" style="left:804px;top:254px" width="16" height="16" viewBox="0 0 16 16"><use href="#printer"/></svg><div style="position:absolute;left:0px;top:290px;width:940px;height:1px;background:#f0f0f0;"></div><div class="t" style="left:24px;top:273px;color:#000;letter-spacing:-0.65px;">M_ROADS_RUL07_State_1</div><div style="position:absolute;left:200px;top:275px;width:18px;height:13px;box-sizing:border-box;background:#008200;border:1px solid #000;"></div><div class="t" style="left:224px;top:273px;color:#000;">0,13...</div><div class="t" style="left:270px;top:273px;color:#000;">Continuous</div><svg class="ic" style="left:368px;top:273px" width="12" height="16" viewBox="0 0 12 16"><use href="#bulb"/></svg><svg class="ic" style="left:427px;top:274px" width="14" height="14" viewBox="0 0 14 14"><use href="#lock"/></svg><svg class="ic" style="left:493px;top:273px" width="16" height="16" viewBox="0 0 16 16"><use href="#sun"/></svg><div style="position:absolute;left:545px;top:280px;width:16px;height:1px;background:#000;"></div><div class="t" style="left:569px;top:273px;color:#000;">0.00 mm</div><div class="t" style="left:656px;top:273px;color:#000;">0</div><div class="t" style="left:716px;top:273px;color:#6d6d6d;">Color_96</div><svg class="ic" style="left:804px;top:273px" width="16" height="16" viewBox="0 0 16 16"><use href="#printer"/></svg><div style="position:absolute;left:0px;top:309px;width:940px;height:1px;background:#f0f0f0;"></div><div class="t" style="left:24px;top:292px;color:#000;letter-spacing:-0.65px;">M_ROADS_RUL07_State_2</div><div style="position:absolute;left:200px;top:294px;width:18px;height:13px;box-sizing:border-box;background:#008200;border:1px solid #000;"></div><div class="t" style="left:224px;top:292px;color:#000;">0,13...</div><div class="t" style="left:270px;top:292px;color:#000;">Continuous</div><svg class="ic" style="left:368px;top:292px" width="12" height="16" viewBox="0 0 12 16"><use href="#bulb"/></svg><svg class="ic" style="left:427px;top:293px" width="14" height="14" viewBox="0 0 14 14"><use href="#lock"/></svg><svg class="ic" style="left:493px;top:292px" width="16" height="16" viewBox="0 0 16 16"><use href="#sun"/></svg><div style="position:absolute;left:545px;top:299px;width:16px;height:1px;background:#000;"></div><div class="t" style="left:569px;top:292px;color:#000;">0.00 mm</div><div class="t" style="left:656px;top:292px;color:#000;">0</div><div class="t" style="left:716px;top:292px;color:#6d6d6d;">Color_96</div><svg class="ic" style="left:804px;top:292px" width="16" height="16" viewBox="0 0 16 16"><use href="#printer"/></svg><div style="position:absolute;left:0px;top:328px;width:940px;height:1px;background:#f0f0f0;"></div><div class="t" style="left:24px;top:311px;color:#000;letter-spacing:-0.65px;">M_ROADS_RUL07_State_3</div><div style="position:absolute;left:200px;top:313px;width:18px;height:13px;box-sizing:border-box;background:#008200;border:1px solid #000;"></div><div class="t" style="left:224px;top:311px;color:#000;">0,13...</div><div class="t" style="left:270px;top:311px;color:#000;">Continuous</div><svg class="ic" style="left:368px;top:311px" width="12" height="16" viewBox="0 0 12 16"><use href="#bulb"/></svg><svg class="ic" style="left:427px;top:312px" width="14" height="14" viewBox="0 0 14 14"><use href="#lock"/></svg><svg class="ic" style="left:493px;top:311px" width="16" height="16" viewBox="0 0 16 16"><use href="#sun"/></svg><div style="position:absolute;left:545px;top:318px;width:16px;height:1px;background:#000;"></div><div class="t" style="left:569px;top:311px;color:#000;">0.00 mm</div><div class="t" style="left:656px;top:311px;color:#000;">0</div><div class="t" style="left:716px;top:311px;color:#6d6d6d;">Color_96</div><svg class="ic" style="left:804px;top:311px" width="16" height="16" viewBox="0 0 16 16"><use href="#printer"/></svg><div style="position:absolute;left:0px;top:347px;width:940px;height:1px;background:#f0f0f0;"></div><div class="t" style="left:24px;top:330px;color:#000;letter-spacing:-0.65px;">M_ROADS_RUL08_NonState</div><div style="position:absolute;left:200px;top:332px;width:18px;height:13px;box-sizing:border-box;background:#fa9bfa;border:1px solid #000;"></div><div class="t" style="left:224px;top:330px;color:#000;">250,...</div><div class="t" style="left:270px;top:330px;color:#000;">Continuous</div><svg class="ic" style="left:368px;top:330px" width="12" height="16" viewBox="0 0 12 16"><use href="#bulb"/></svg><svg class="ic" style="left:427px;top:331px" width="14" height="14" viewBox="0 0 14 14"><use href="#lock"/></svg><svg class="ic" style="left:493px;top:330px" width="16" height="16" viewBox="0 0 16 16"><use href="#sun"/></svg><div style="position:absolute;left:545px;top:337px;width:16px;height:1px;background:#000;"></div><div class="t" style="left:569px;top:330px;color:#000;">0.00 mm</div><div class="t" style="left:656px;top:330px;color:#000;">0</div><div class="t" style="left:716px;top:330px;color:#6d6d6d;">Color_211</div><svg class="ic" style="left:804px;top:330px" width="16" height="16" viewBox="0 0 16 16"><use href="#printer"/></svg><div style="position:absolute;left:0px;top:366px;width:940px;height:1px;background:#f0f0f0;"></div><div class="t" style="left:24px;top:349px;color:#000;letter-spacing:-0.65px;">M_ROADS_RUL08_NonState_1</div><div style="position:absolute;left:200px;top:351px;width:18px;height:13px;box-sizing:border-box;background:#fa9bfa;border:1px solid #000;"></div><div class="t" style="left:224px;top:349px;color:#000;">250,...</div><div class="t" style="left:270px;top:349px;color:#000;">Continuous</div><svg class="ic" style="left:368px;top:349px" width="12" height="16" viewBox="0 0 12 16"><use href="#bulb"/></svg><svg class="ic" style="left:427px;top:350px" width="14" height="14" viewBox="0 0 14 14"><use href="#lock"/></svg><svg class="ic" style="left:493px;top:349px" width="16" height="16" viewBox="0 0 16 16"><use href="#sun"/></svg><div style="position:absolute;left:545px;top:356px;width:16px;height:1px;background:#000;"></div><div class="t" style="left:569px;top:349px;color:#000;">0.00 mm</div><div class="t" style="left:656px;top:349px;color:#000;">0</div><div class="t" style="left:716px;top:349px;color:#6d6d6d;">Color_211</div><svg class="ic" style="left:804px;top:349px" width="16" height="16" viewBox="0 0 16 16"><use href="#printer"/></svg><div style="position:absolute;left:0px;top:385px;width:940px;height:1px;background:#f0f0f0;"></div><div class="t" style="left:24px;top:368px;color:#000;letter-spacing:-0.65px;">M_ROADS_RUL08_NonState_2</div><div style="position:absolute;left:200px;top:370px;width:18px;height:13px;box-sizing:border-box;background:#fa9bfa;border:1px solid #000;"></div><div class="t" style="left:224px;top:368px;color:#000;">250,...</div><div class="t" style="left:270px;top:368px;color:#000;">Continuous</div><svg class="ic" style="left:368px;top:368px" width="12" height="16" viewBox="0 0 12 16"><use href="#bulb"/></svg><svg class="ic" style="left:427px;top:369px" width="14" height="14" viewBox="0 0 14 14"><use href="#lock"/></svg><svg class="ic" style="left:493px;top:368px" width="16" height="16" viewBox="0 0 16 16"><use href="#sun"/></svg><div style="position:absolute;left:545px;top:375px;width:16px;height:1px;background:#000;"></div><div class="t" style="left:569px;top:368px;color:#000;">0.00 mm</div><div class="t" style="left:656px;top:368px;color:#000;">0</div><div class="t" style="left:716px;top:368px;color:#6d6d6d;">Color_211</div><svg class="ic" style="left:804px;top:368px" width="16" height="16" viewBox="0 0 16 16"><use href="#printer"/></svg><div style="position:absolute;left:0px;top:404px;width:940px;height:1px;background:#f0f0f0;"></div><div class="t" style="left:24px;top:387px;color:#000;letter-spacing:-0.65px;">M_ROADS_RUL08_NonState_3</div><div style="position:absolute;left:200px;top:389px;width:18px;height:13px;box-sizing:border-box;background:#fa9bfa;border:1px solid #000;"></div><div class="t" style="left:224px;top:387px;color:#000;">250,...</div><div class="t" style="left:270px;top:387px;color:#000;">Continuous</div><svg class="ic" style="left:368px;top:387px" width="12" height="16" viewBox="0 0 12 16"><use href="#bulb"/></svg><svg class="ic" style="left:427px;top:388px" width="14" height="14" viewBox="0 0 14 14"><use href="#lock"/></svg><svg class="ic" style="left:493px;top:387px" width="16" height="16" viewBox="0 0 16 16"><use href="#sun"/></svg><div style="position:absolute;left:545px;top:394px;width:16px;height:1px;background:#000;"></div><div class="t" style="left:569px;top:387px;color:#000;">0.00 mm</div><div class="t" style="left:656px;top:387px;color:#000;">0</div><div class="t" style="left:716px;top:387px;color:#6d6d6d;">Color_211</div><svg class="ic" style="left:804px;top:387px" width="16" height="16" viewBox="0 0 16 16"><use href="#printer"/></svg><div style="position:absolute;left:0px;top:423px;width:940px;height:1px;background:#f0f0f0;"></div><div class="t" style="left:24px;top:406px;color:#000;letter-spacing:-0.65px;">M_ROADS_RUL08_State</div><div style="position:absolute;left:200px;top:408px;width:18px;height:13px;box-sizing:border-box;background:#fa9bfa;border:1px solid #000;"></div><div class="t" style="left:224px;top:406px;color:#000;">250,...</div><div class="t" style="left:270px;top:406px;color:#000;">Continuous</div><svg class="ic" style="left:368px;top:406px" width="12" height="16" viewBox="0 0 12 16"><use href="#bulb"/></svg><svg class="ic" style="left:427px;top:407px" width="14" height="14" viewBox="0 0 14 14"><use href="#lock"/></svg><svg class="ic" style="left:493px;top:406px" width="16" height="16" viewBox="0 0 16 16"><use href="#sun"/></svg><div style="position:absolute;left:545px;top:413px;width:16px;height:1px;background:#000;"></div><div class="t" style="left:569px;top:406px;color:#000;">0.00 mm</div><div class="t" style="left:656px;top:406px;color:#000;">0</div><div class="t" style="left:716px;top:406px;color:#6d6d6d;">Color_211</div><svg class="ic" style="left:804px;top:406px" width="16" height="16" viewBox="0 0 16 16"><use href="#printer"/></svg><div style="position:absolute;left:0px;top:442px;width:940px;height:1px;background:#f0f0f0;"></div><div class="t" style="left:24px;top:425px;color:#000;letter-spacing:-0.65px;">M_ROADS_RUL08_State_1</div><div style="position:absolute;left:200px;top:427px;width:18px;height:13px;box-sizing:border-box;background:#fa9bfa;border:1px solid #000;"></div><div class="t" style="left:224px;top:425px;color:#000;">250,...</div><div class="t" style="left:270px;top:425px;color:#000;">Continuous</div><svg class="ic" style="left:368px;top:425px" width="12" height="16" viewBox="0 0 12 16"><use href="#bulb"/></svg><svg class="ic" style="left:427px;top:426px" width="14" height="14" viewBox="0 0 14 14"><use href="#lock"/></svg><svg class="ic" style="left:493px;top:425px" width="16" height="16" viewBox="0 0 16 16"><use href="#sun"/></svg><div style="position:absolute;left:545px;top:432px;width:16px;height:1px;background:#000;"></div><div class="t" style="left:569px;top:425px;color:#000;">0.00 mm</div><div class="t" style="left:656px;top:425px;color:#000;">0</div><div class="t" style="left:716px;top:425px;color:#6d6d6d;">Color_211</div><svg class="ic" style="left:804px;top:425px" width="16" height="16" viewBox="0 0 16 16"><use href="#printer"/></svg><div style="position:absolute;left:0px;top:461px;width:940px;height:1px;background:#f0f0f0;"></div><div class="t" style="left:24px;top:444px;color:#000;letter-spacing:-0.65px;">M_ROADS_RUL09_Other</div><div style="position:absolute;left:200px;top:446px;width:18px;height:13px;box-sizing:border-box;background:#ffffff;border:1px solid #000;"></div><div class="t" style="left:224px;top:444px;color:#000;">white</div><div class="t" style="left:270px;top:444px;color:#000;">Continuous</div><svg class="ic" style="left:368px;top:444px" width="12" height="16" viewBox="0 0 12 16"><use href="#bulb"/></svg><svg class="ic" style="left:427px;top:445px" width="14" height="14" viewBox="0 0 14 14"><use href="#lock"/></svg><svg class="ic" style="left:493px;top:444px" width="16" height="16" viewBox="0 0 16 16"><use href="#sun"/></svg><div style="position:absolute;left:545px;top:451px;width:16px;height:1px;background:#000;"></div><div class="t" style="left:569px;top:444px;color:#000;">0.00 mm</div><div class="t" style="left:656px;top:444px;color:#000;">0</div><div class="t" style="left:716px;top:444px;color:#6d6d6d;">Color_7</div><svg class="ic" style="left:804px;top:444px" width="16" height="16" viewBox="0 0 16 16"><use href="#printer"/></svg><div style="position:absolute;left:0px;top:480px;width:940px;height:1px;background:#f0f0f0;"></div><div class="t" style="left:24px;top:463px;color:#000;letter-spacing:-0.65px;">M_ROADS_RUL09_Other_1</div><div style="position:absolute;left:200px;top:465px;width:18px;height:13px;box-sizing:border-box;background:#ffffff;border:1px solid #000;"></div><div class="t" style="left:224px;top:463px;color:#000;">white</div><div class="t" style="left:270px;top:463px;color:#000;">Continuous</div><svg class="ic" style="left:368px;top:463px" width="12" height="16" viewBox="0 0 12 16"><use href="#bulb"/></svg><svg class="ic" style="left:427px;top:464px" width="14" height="14" viewBox="0 0 14 14"><use href="#lock"/></svg><svg class="ic" style="left:493px;top:463px" width="16" height="16" viewBox="0 0 16 16"><use href="#sun"/></svg><div style="position:absolute;left:545px;top:470px;width:16px;height:1px;background:#000;"></div><div class="t" style="left:569px;top:463px;color:#000;">0.00 mm</div><div class="t" style="left:656px;top:463px;color:#000;">0</div><div class="t" style="left:716px;top:463px;color:#6d6d6d;">Color_7</div><svg class="ic" style="left:804px;top:463px" width="16" height="16" viewBox="0 0 16 16"><use href="#printer"/></svg></div><div style="position:absolute;left:1349px;top:104px;width:17px;height:481px;background:#f0f0f0;"></div><svg class="ic" style="left:1353px;top:111px" width="8" height="7" viewBox="0 0 8 7"><path d="M0.5 6L4 2.5L7.5 6" fill="none" stroke="#505050" stroke-width="2.2"/></svg><svg class="ic" style="left:1353px;top:574px" width="8" height="7" viewBox="0 0 8 7"><path d="M0.5 1L4 4.5L7.5 1" fill="none" stroke="#505050" stroke-width="2.2"/></svg><div style="position:absolute;left:1349px;top:490px;width:15px;height:27px;background:#cdcdcd;"></div><div style="position:absolute;left:8px;top:589px;width:1361px;height:19px;background:#f0f0f0;"></div><div style="position:absolute;left:8px;top:587px;width:207px;height:1px;background:#fff;"></div><div class="t" style="left:11px;top:591px;letter-spacing:-0.4px;">Ready</div><div style="position:absolute;left:1365px;top:597px;width:2px;height:2px;background:#b0b0b0;"></div><div style="position:absolute;left:1362px;top:600px;width:2px;height:2px;background:#b0b0b0;"></div><div style="position:absolute;left:1365px;top:600px;width:2px;height:2px;background:#b0b0b0;"></div><div style="position:absolute;left:1359px;top:603px;width:2px;height:2px;background:#b0b0b0;"></div><div style="position:absolute;left:1362px;top:603px;width:2px;height:2px;background:#b0b0b0;"></div><div style="position:absolute;left:1365px;top:603px;width:2px;height:2px;background:#b0b0b0;"></div></body></html>
